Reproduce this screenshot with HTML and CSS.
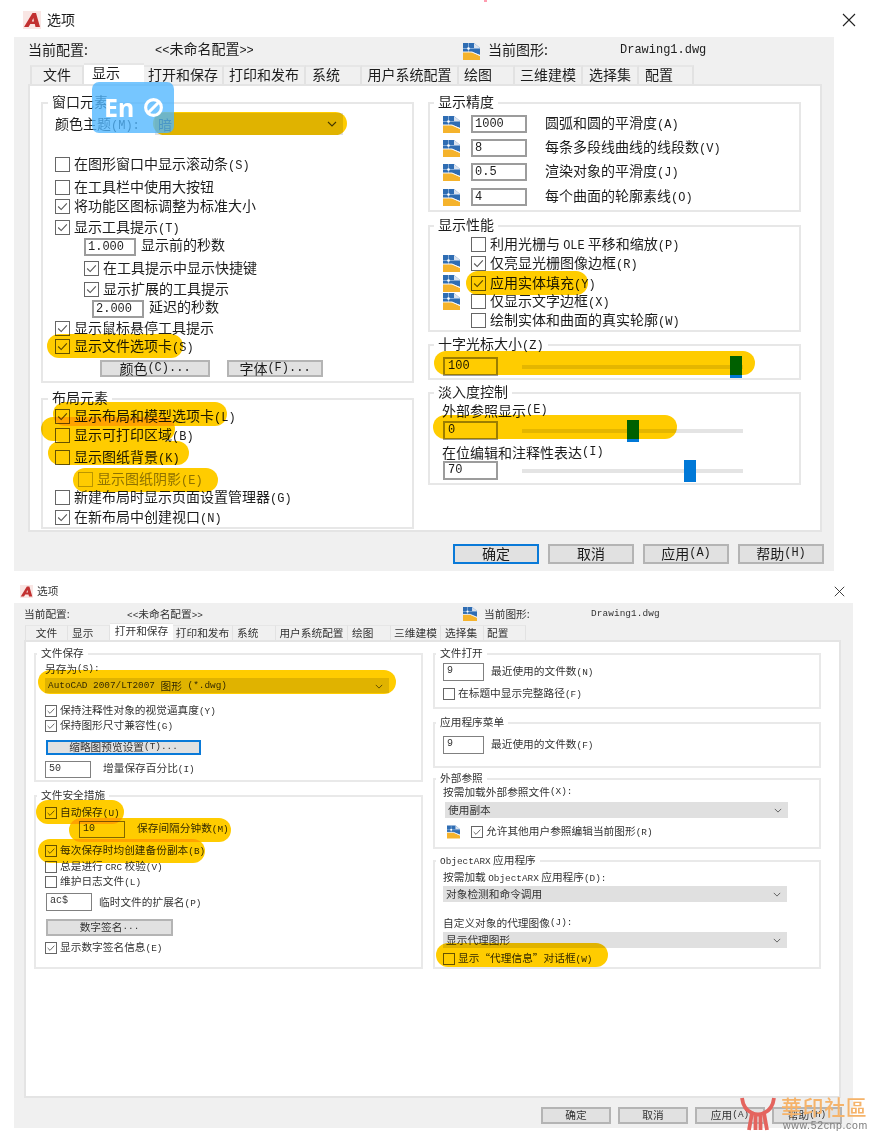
FILE: index.html
```html
<!DOCTYPE html>
<html lang="zh-CN">
<head>
<meta charset="utf-8">
<title>选项</title>
<link rel="stylesheet" href="styles.css">
</head>
<body>
<svg class="defs" aria-hidden="true">
  <symbol id="tick" viewBox="0 0 15 15"><path d="M2.5 7.5 6 11l6.5-7" fill="none" stroke="#555" stroke-width="1.3"/></symbol>
  <symbol id="cad" viewBox="0 0 17 17">
    <path d="M0 0h11l6 5v7L9 9H0z" fill="#2f6db3"/>
    <path d="M11 0l6 5h-6z" fill="#dbe3ee"/>
    <path d="M0 5.500h17M5.500 0v9" stroke="#a9c6e8" stroke-width=".7"/>
    <circle cx="5.500" cy="5.500" r="1.300" fill="#fff"/>
    <path d="M0 9h8l9 4v4H0z" fill="#f5b32c"/>
    <path d="M0 9h9l8 3.500" fill="none" stroke="#f5f5f5" stroke-width="1"/>
  </symbol>
  <symbol id="autocad" viewBox="0 0 18 18">
    <rect width="18" height="18" fill="#f9e6e4"/>
    <path d="M1 16 9.500 2H13l4 14h-4.500l-.7-3H7.300l-1.800 3zM8.800 10.500H11L10.300 7z" fill="#c23030"/>
  </symbol>
</svg>
<main class="page">
  <div class="dot"></div>

  <section class="dialog dialog-a">
    <header class="titlebar">
      <svg class="logo"><use href="#autocad"/></svg>
      <span class="title">选项</span>
      <svg class="close" viewBox="0 0 14 14"><path d="M1 1l12 12M13 1 1 13" stroke="#222" stroke-width="1.1"/></svg>
    </header>
    <div class="body">
      <div class="profile">
        <span class="p-label">当前配置:</span>
        <span class="p-value"><i class="k">&lt;&lt;</i>未命名配置<i class="k">&gt;&gt;</i></span>
        <svg class="cad"><use href="#cad"/></svg>
        <span class="p-label2">当前图形:</span>
        <span class="k p-file">Drawing1.dwg</span>
      </div>
      <nav class="tabs">
        <span class="tab">文件</span><span class="tab active">显示</span><span class="tab">打开和保存</span><span class="tab">打印和发布</span><span class="tab">系统</span><span class="tab">用户系统配置</span><span class="tab">绘图</span><span class="tab">三维建模</span><span class="tab">选择集</span><span class="tab">配置</span>
      </nav>
      <div class="panel">
        <div class="col">
          <div class="group g-window">
            <span class="legend">窗口元素</span>
            <div class="row tall mt-9"><span class="theme-label">颜色主题<i class="k">(M):</i></span><div class="select theme-select"><span>暗</span><svg class="chev" viewBox="0 0 10 6"><path d="M1 1l4 4 4-4" fill="none" stroke="#444" stroke-width="1.1"/></svg></div></div>
            <div class="row mt-20"><span class="box"></span><span>在图形窗口中显示滚动条<i class="k">(S)</i></span></div>
            <div class="row mt-5"><span class="box"></span><span>在工具栏中使用大按钮</span></div>
            <div class="row mt-1"><span class="box"><svg><use href="#tick"/></svg></span><span>将功能区图标调整为标准大小</span></div>
            <div class="row mt-3"><span class="box"><svg><use href="#tick"/></svg></span><span>显示工具提示<i class="k">(T)</i></span></div>
            <div class="row mt-2 in-29"><span class="inp w-52">1.000</span><span class="after-inp up">显示前的秒数</span></div>
            <div class="row mt-3 in-29"><span class="box"><svg><use href="#tick"/></svg></span><span>在工具提示中显示快捷键</span></div>
            <div class="row mt-3 in-29"><span class="box"><svg><use href="#tick"/></svg></span><span>显示扩展的工具提示</span></div>
            <div class="row mt-2 in-37"><span class="inp w-52">2.000</span><span class="after-inp up">延迟的秒数</span></div>
            <div class="row mt-1"><span class="box"><svg><use href="#tick"/></svg></span><span>显示鼠标悬停工具提示</span></div>
            <div class="row"><span class="box"><svg><use href="#tick"/></svg></span><span>显示文件选项卡<i class="k">(S)</i></span></div>
            <div class="row mt-5 in-45 btn-row"><span class="btn b-color">颜色<i class="k">(C)...</i></span><span class="btn b-font">字体<i class="k">(F)...</i></span></div>
          </div>
          <div class="group g-layout">
            <span class="legend">布局元素</span>
            <div class="row mt-7"><span class="box"><svg><use href="#tick"/></svg></span><span>显示布局和模型选项卡<i class="k">(L)</i></span></div>
            <div class="row mt-1"><span class="box"></span><span>显示可打印区域<i class="k">(B)</i></span></div>
            <div class="row mt-4"><span class="box"></span><span>显示图纸背景<i class="k">(K)</i></span></div>
            <div class="row mt-4 in-23 disabled"><span class="box"></span><span>显示图纸阴影<i class="k">(E)</i></span></div>
            <div class="row"><span class="box"></span><span>新建布局时显示页面设置管理器<i class="k">(G)</i></span></div>
            <div class="row mt-2"><span class="box"><svg><use href="#tick"/></svg></span><span>在新布局中创建视口<i class="k">(N)</i></span></div>
          </div>
        </div>
        <div class="col">
          <div class="group g-precision pad-3">
            <span class="legend">显示精度</span>
            <div class="row mt-11"><svg class="cad"><use href="#cad"/></svg><span class="inp w-56">1000</span><span class="after-w">圆弧和圆的平滑度<i class="k">(A)</i></span></div>
            <div class="row mt-6"><svg class="cad"><use href="#cad"/></svg><span class="inp w-56">8</span><span class="after-w">每条多段线曲线的线段数<i class="k">(V)</i></span></div>
            <div class="row mt-6"><svg class="cad"><use href="#cad"/></svg><span class="inp w-56">0.5</span><span class="after-w">渲染对象的平滑度<i class="k">(J)</i></span></div>
            <div class="row mt-7"><svg class="cad"><use href="#cad"/></svg><span class="inp w-56">4</span><span class="after-w">每个曲面的轮廓素线<i class="k">(O)</i></span></div>
          </div>
          <div class="group g-perf pad-3">
            <span class="legend">显示性能</span>
            <div class="row mt-8"><span class="cad-slot"></span><span class="box"></span><span>利用光栅与 <i class="k">OLE</i> 平移和缩放<i class="k">(P)</i></span></div>
            <div class="row mt-1"><svg class="cad"><use href="#cad"/></svg><span class="box"><svg><use href="#tick"/></svg></span><span>仅亮显光栅图像边框<i class="k">(R)</i></span></div>
            <div class="row mt-2"><svg class="cad"><use href="#cad"/></svg><span class="box"><svg><use href="#tick"/></svg></span><span>应用实体填充<i class="k">(Y)</i></span></div>
            <div class="row"><svg class="cad"><use href="#cad"/></svg><span class="box"></span><span>仅显示文字边框<i class="k">(X)</i></span></div>
            <div class="row mt-1"><span class="cad-slot"></span><span class="box"></span><span>绘制实体和曲面的真实轮廓<i class="k">(W)</i></span></div>
          </div>
          <div class="group g-cross pad-3">
            <span class="legend">十字光标大小<i class="k">(Z)</i></span>
            <div class="row mt-11"><span class="inp w-55">100</span><div class="slider"><span class="thumb t-100"></span></div></div>
          </div>
          <div class="group g-fade pad-3">
            <span class="legend">淡入度控制</span>
            <div class="row mt-7 label-in">外部参照显示<i class="k">(E)</i></div>
            <div class="row mt-2"><span class="inp w-55">0</span><div class="slider"><span class="thumb t-0"></span></div></div>
            <div class="row mt-3 label-in">在位编辑和注释性表达<i class="k">(I)</i></div>
            <div class="row"><span class="inp w-55">70</span><div class="slider"><span class="thumb t-70"></span></div></div>
          </div>
        </div>
      </div>
      <footer class="footer">
        <span class="btn primary">确定</span><span class="btn">取消</span><span class="btn">应用<i class="k">(A)</i></span><span class="btn">帮助<i class="k">(H)</i></span>
      </footer>
    </div>
  </section>

  <section class="dialog dialog-b">
    <header class="titlebar">
      <svg class="logo"><use href="#autocad"/></svg>
      <span class="title">选项</span>
      <svg class="close" viewBox="0 0 14 14"><path d="M1 1l12 12M13 1 1 13" stroke="#222" stroke-width="1.1"/></svg>
    </header>
    <div class="body">
      <div class="profile">
        <span class="p-label">当前配置:</span>
        <span class="p-value"><i class="k">&lt;&lt;</i>未命名配置<i class="k">&gt;&gt;</i></span>
        <svg class="cad"><use href="#cad"/></svg>
        <span class="p-label2">当前图形:</span>
        <span class="k p-file">Drawing1.dwg</span>
      </div>
      <nav class="tabs">
        <span class="tab">文件</span><span class="tab">显示</span><span class="tab active">打开和保存</span><span class="tab">打印和发布</span><span class="tab">系统</span><span class="tab">用户系统配置</span><span class="tab">绘图</span><span class="tab">三维建模</span><span class="tab">选择集</span><span class="tab">配置</span>
      </nav>
      <div class="panel">
        <div class="col">
          <div class="group g-save">
            <span class="legend">文件保存</span>
            <div class="row mt-7">另存为<i class="k">(S):</i></div>
            <div class="select sel-saveas mt-2"><span class="k">AutoCAD 2007/LT2007 </span><span>图形</span><span class="k"> (*.dwg)</span><svg class="chev" viewBox="0 0 10 6"><path d="M1 1l4 4 4-4" fill="none" stroke="#444" stroke-width="1"/></svg></div>
            <div class="row mt-11"><span class="box"><svg><use href="#tick"/></svg></span><span>保持注释性对象的视觉逼真度<i class="k">(Y)</i></span></div>
            <div class="row mt-1"><span class="box"><svg><use href="#tick"/></svg></span><span>保持图形尺寸兼容性<i class="k">(G)</i></span></div>
            <div class="row mt-7 in-1 row-btn"><span class="btn primary b-thumb">缩略图预览设置<i class="k">(T)...</i></span></div>
            <div class="row mt-6 row-inp"><span class="inp w-46">50</span><span class="after-50">增量保存百分比<i class="k">(I)</i></span></div>
          </div>
          <div class="group g-safety">
            <span class="legend">文件安全措施</span>
            <div class="row mt-9"><span class="box"><svg><use href="#tick"/></svg></span><span>自动保存<i class="k">(U)</i></span></div>
            <div class="row mt-1 in-34 row-inp"><span class="inp w-46">10</span><span class="after-50">保存间隔分钟数<i class="k">(M)</i></span></div>
            <div class="row mt-6"><span class="box"><svg><use href="#tick"/></svg></span><span>每次保存时均创建备份副本<i class="k">(B)</i></span></div>
            <div class="row mt-2"><span class="box"></span><span>总是进行 <i class="k">CRC</i> 校验<i class="k">(V)</i></span></div>
            <div class="row mt-1"><span class="box"></span><span>维护日志文件<i class="k">(L)</i></span></div>
            <div class="row mt-4 in-1 row-inp18"><span class="inp w-46">ac$</span><span class="after-ac">临时文件的扩展名<i class="k">(P)</i></span></div>
            <div class="row mt-8 in-1 row-inp"><span class="btn b-sign">数字签名<i class="k">...</i></span></div>
            <div class="row mt-5"><span class="box"><svg><use href="#tick"/></svg></span><span>显示数字签名信息<i class="k">(E)</i></span></div>
          </div>
        </div>
        <div class="col">
          <div class="group g-open">
            <span class="legend">文件打开</span>
            <div class="row mt-8 row-inp18"><span class="inp w-41">9</span><span class="after-9">最近使用的文件数<i class="k">(N)</i></span></div>
            <div class="row mt-6"><span class="box"></span><span>在标题中显示完整路径<i class="k">(F)</i></span></div>
          </div>
          <div class="group g-menu">
            <span class="legend">应用程序菜单</span>
            <div class="row mt-12 row-inp18"><span class="inp w-41">9</span><span class="after-9">最近使用的文件数<i class="k">(F)</i></span></div>
          </div>
          <div class="group g-xref">
            <span class="legend">外部参照</span>
            <div class="row mt-5">按需加载外部参照文件<i class="k">(X):</i></div>
            <div class="select sel-xref mt-3"><span>使用副本</span><svg class="chev" viewBox="0 0 10 6"><path d="M1 1l4 4 4-4" fill="none" stroke="#444" stroke-width="1"/></svg></div>
            <div class="row mt-7 in-4"><svg class="cad"><use href="#cad"/></svg><span class="box"><svg><use href="#tick"/></svg></span><span>允许其他用户参照编辑当前图形<i class="k">(R)</i></span></div>
          </div>
          <div class="group g-arx">
            <span class="legend"><i class="k">ObjectARX</i> 应用程序</span>
            <div class="row mt-8"><span>按需加载 <i class="k">ObjectARX</i> 应用程序<i class="k">(D):</i></span></div>
            <div class="select sel-arx mt-2"><span>对象检测和命令调用</span><svg class="chev" viewBox="0 0 10 6"><path d="M1 1l4 4 4-4" fill="none" stroke="#444" stroke-width="1"/></svg></div>
            <div class="row mt-14">自定义对象的代理图像<i class="k">(J):</i></div>
            <div class="select sel-arx mt-2"><span>显示代理图形</span><svg class="chev" viewBox="0 0 10 6"><path d="M1 1l4 4 4-4" fill="none" stroke="#444" stroke-width="1"/></svg></div>
            <div class="row mt-4"><span class="box"></span><span>显示“代理信息”对话框<i class="k">(W)</i></span></div>
          </div>
        </div>
      </div>
      <footer class="footer">
        <span class="btn">确定</span><span class="btn">取消</span><span class="btn">应用<i class="k">(A)</i></span><span class="btn">帮助<i class="k">(H)</i></span>
      </footer>
    </div>
  </section>

  <div class="hl h1"></div><div class="hl h2"></div><div class="hl h3"></div><div class="hl h4"></div><div class="hl h5"></div><div class="hl h6"></div><div class="hl h7"></div><div class="hl h8"></div><div class="hl h9"></div>
  <div class="hl h10"></div><div class="hl h11"></div><div class="hl h12"></div><div class="hl h13"></div><div class="hl h14"></div>

  <div class="ime"><span>En</span><svg viewBox="0 0 20 20"><circle cx="10" cy="10" r="7.5" fill="none" stroke="#fff" stroke-width="3"/><path d="M5 15 15 5" stroke="#fff" stroke-width="3"/></svg></div>

  <div class="watermark">
    <svg class="wm-logo" viewBox="0 0 36 34"><path d="M2 1C3 9 7 14 12 16L9 33M34 1C33 9 29 14 24 16L27 33M12 16Q18 19 24 16M15.500 19V33M20.500 19V33" fill="none" stroke="#e4645e" stroke-width="3.800"/></svg>
    <span class="wm-name">華印社區</span>
    <span class="wm-url">www.52cnp.com</span>
  </div>
</main>
</body>
</html>
```
FILE: styles.css
```css
* { box-sizing: border-box; }
html, body { margin: 0; padding: 0; overflow: hidden; background: #fff; }
.defs { position: absolute; width: 0; height: 0; }
.page {
  position: relative;
  width: 869px;
  height: 1132px;
  overflow: hidden;
  background: #fff;
  color: #1c1c1c;
  font-family: "Noto Sans CJK SC", "Liberation Sans", sans-serif;
  filter: blur(.35px);
}
.k { font-family: "Liberation Mono", monospace; font-style: normal; font-size: .857em; }
i.k { line-height: 0; }
.dot { position: absolute; left: 484px; top: 0; width: 3px; height: 2px; background: #ff9db0; }

/* ---- shared dialog structure ---- */
.titlebar { display: flex; align-items: center; }
.close { margin-left: auto; }
.profile { display: flex; align-items: center; }
.tabs { display: flex; align-items: flex-end; }
.tab {
  display: block;
  text-align: center;
  background: #f0f0f0;
  border-top: 2px solid #e6e6e6;
  border-right: 2px solid #e2e2e2;
}
.tab:nth-child(1) { border-left: 2px solid #e2e2e2; }
.tab.active { background: #fff; border-right: 0; }
.panel {
  display: grid;
  background: #fff;
  border: 2px solid #e4e4e4;
}
.group { position: relative; border: 2px solid #e7e7e7; background: #fff; }
.legend { position: absolute; background: #fff; white-space: nowrap; }
.row { display: flex; align-items: center; white-space: nowrap; }
.box {
  display: block;
  flex: none;
  background: #fff;
  border: 1.5px solid #666;
}
.box svg { display: block; width: 100%; height: 100%; }
.inp {
  display: block;
  flex: none;
  background: #fff;
  font-family: "Liberation Mono", monospace;
  white-space: nowrap;
}
.select { position: relative; display: flex; align-items: center; background: #e0e0e0; white-space: pre; }
.chev { position: absolute; top: 50%; }
.btn {
  display: flex;
  align-items: center;
  justify-content: center;
  background: #e1e1e1;
  border: 2px solid #b4b4b4;
  padding-bottom: 2px;
  white-space: nowrap;
}
.btn.primary { border-color: #0a7ad8; }
.footer { display: flex; justify-content: flex-end; }
.cad { display: block; flex: none; }

.mt-1 { margin-top: 1px; } .mt-2 { margin-top: 2px; } .mt-3 { margin-top: 3px; } .mt-4 { margin-top: 4px; }
.mt-5 { margin-top: 5px; } .mt-6 { margin-top: 6px; } .mt-7 { margin-top: 7px; } .mt-8 { margin-top: 8px; }
.mt-9 { margin-top: 9px; } .mt-11 { margin-top: 11px; } .mt-12 { margin-top: 12px; } .mt-14 { margin-top: 14px; }
.mt-20 { margin-top: 20px; }

/* ---- dialog A ---- */
.dialog-a { font-size: 14px; line-height: 18px; }
.dialog-a .titlebar { height: 37px; padding: 3px 13px 0 23px; }
.dialog-a .logo { width: 18px; height: 18px; }
.dialog-a .title { margin-left: 6px; margin-bottom: 2px; font-size: 14px; }
.dialog-a .close { width: 14px; height: 14px; margin-right: 0; }
.dialog-a .body { margin-left: 14px; width: 820px; height: 534px; background: #f0f0f0; }
.dialog-a .profile { height: 28px; padding-left: 14px; }
.dialog-a .p-label { width: 127px; margin-bottom: 4px; }
.dialog-a .p-value { width: 308px; margin-bottom: 6px; }
.dialog-a .cad { width: 17px; height: 17px; }
.dialog-a .p-label2 { width: 132px; margin-left: 8px; margin-bottom: 5px; }
.dialog-a .p-file { margin-bottom: 2px; }
.dialog-a .tabs { height: 19px; margin-left: 16px; }
.dialog-a .tab { height: 19px; line-height: 15px; }
.dialog-a .tab.active { height: 21px; padding: 0 0 0 8px; text-align: left; margin-top: -2px; }
.dialog-a .tab:nth-child(1) { width: 54px; }
.dialog-a .tab:nth-child(2) { width: 60px; }
.dialog-a .tab:nth-child(3) { width: 80px; }
.dialog-a .tab:nth-child(4) { width: 82px; }
.dialog-a .tab:nth-child(5) { width: 56px; text-align: left; padding-left: 6px; }
.dialog-a .tab:nth-child(6) { width: 97px; }
.dialog-a .tab:nth-child(7) { width: 56px; text-align: left; padding-left: 5px; }
.dialog-a .tab:nth-child(8) { width: 68px; }
.dialog-a .tab:nth-child(9) { width: 56px; text-align: left; padding-left: 6px; }
.dialog-a .tab:nth-child(10) { width: 55px; text-align: left; padding-left: 6px; }
.dialog-a .panel {
  margin-left: 14px;
  width: 794px;
  height: 448px;
  padding: 16px 0 0 11px;
  grid-template-columns: 373px 373px;
  column-gap: 14px;
  align-content: start;
}
.dialog-a .legend { left: 5px; top: -12px; padding: 0 4px; }
.dialog-a .pad-3 .legend { left: 4px; }
.dialog-a .row { height: 18px; }
.dialog-a .row.tall { height: 22px; }
.dialog-a .btn-row { height: 17px; }
.dialog-a .g-cross .row, .dialog-a .g-fade .row { height: 19px; }
.dialog-a .g-fade .label-in { height: 18px; }
.dialog-a .group { padding-left: 12px; }
.dialog-a .group.pad-3 { padding-left: 13px; }
.g-window { height: 281px; }
.g-layout { height: 131px; margin-top: 15px; }
.g-precision { height: 110px; }
.g-perf { height: 107px; margin-top: 13px; }
.g-cross { height: 36px; margin-top: 12px; }
.g-fade { height: 93px; margin-top: 12px; }
.theme-label { width: 100px; margin-bottom: 2px; }
.theme-select { width: 188px; height: 22px; padding-left: 3px; color: #333; }
.theme-select .chev { right: 6px; width: 10px; height: 6px; margin-top: -3px; }
.dialog-a .box { width: 15px; height: 15px; margin-right: 4px; }
.dialog-a .box + span { margin-bottom: 3px; }
.dialog-a .inp { height: 18px; line-height: 15px; border: 2px solid #9c9c9c; padding-left: 2px; font-size: 12px; }
.dialog-a .inp.w-55 { height: 19px; }
.w-52 { width: 52px; } .w-56 { width: 56px; } .w-55 { width: 55px; } .w-46 { width: 46px; } .w-41 { width: 41px; }
.in-29 { margin-left: 29px; } .in-37 { margin-left: 37px; } .in-45 { margin-left: 45px; } .in-23 { margin-left: 23px; }
.in-1 { margin-left: 1px; } .in-4 { margin-left: 4px; } .in-34 { margin-left: 34px; }
.after-inp { margin-left: 5px; }
.up { margin-bottom: 7px; }
.after-w { margin-left: 18px; margin-bottom: 5px; }
.disabled { color: #8f8f8f; }
.disabled .box { border-color: #bbb; }
.dialog-a .pad-3 .cad { margin-right: 11px; }
.cad-slot { width: 28px; flex: none; }
.btn-row { gap: 17px; }
.b-color { width: 110px; height: 17px; }
.b-font { width: 96px; height: 17px; }
.g-fade .inp, .g-cross .inp { padding-left: 3px; }
.label-in { margin-left: -1px; }
.slider { position: relative; width: 221px; height: 4px; margin-left: 24px; background: #e4e4e4; }
.thumb { position: absolute; top: -9px; width: 12px; height: 22px; background: #0078d7; }
.t-100 { left: 208px; } .t-0 { left: 105px; } .t-70 { left: 162px; }
.dialog-a .footer { gap: 9px; padding-right: 10px; margin-top: 12px; }
.dialog-a .footer .btn { width: 86px; height: 20px; }

/* ---- dialog B ---- */
.dialog-b { font-size: 10.7px; line-height: 14px; color: #333; }
.dialog-b .k { font-size: 9.4px; }
.dialog-b .titlebar { height: 32px; padding: 8px 9px 0 20px; }
.dialog-b .logo { width: 13px; height: 13px; }
.dialog-b .title { margin-left: 4px; }
.dialog-b .close { width: 11px; height: 11px; margin-right: 15px; }
.dialog-b .body { margin-left: 14px; width: 839px; height: 525px; background: #f0f0f0; }
.dialog-b .profile { height: 22px; padding-left: 10px; }
.dialog-b .p-label { width: 103px; }
.dialog-b .p-value { width: 336px; }
.dialog-b .cad { width: 14px; height: 14px; }
.dialog-b .p-label2 { width: 107px; margin-left: 7px; }
.dialog-b .p-file { letter-spacing: .1px; }
.dialog-b .tabs { height: 15px; margin-left: 11px; }
.dialog-b .tab { height: 15px; border-top-width: 1px; border-right-width: 1px; line-height: 14px; }
.dialog-b .tab:nth-child(1) { border-left-width: 1px; width: 43px; }
.dialog-b .tab.active { height: 17px; margin-top: -2px; border-top-width: 1px; }
.dialog-b .tab:nth-child(2) { width: 42px; text-align: left; padding-left: 4px; }
.dialog-b .tab:nth-child(3) { width: 63px; }
.dialog-b .tab:nth-child(4) { width: 60px; }
.dialog-b .tab:nth-child(5) { width: 43px; text-align: left; padding-left: 4px; }
.dialog-b .tab:nth-child(6) { width: 72px; }
.dialog-b .tab:nth-child(7) { width: 43px; text-align: left; padding-left: 4px; }
.dialog-b .tab:nth-child(8) { width: 50px; }
.dialog-b .tab:nth-child(9) { width: 43px; text-align: left; padding-left: 4px; }
.dialog-b .tab:nth-child(10) { width: 42px; text-align: left; padding-left: 3px; }
.dialog-b .panel {
  margin-left: 10px;
  width: 817px;
  height: 458px;
  padding: 11px 0 0 8px;
  grid-template-columns: 389px 388px;
  column-gap: 10px;
  align-content: start;
}
.dialog-b .legend { left: 1px; top: -9px; padding: 0 4px; }
.dialog-b .row { height: 14px; }
.dialog-b .row.row-inp { height: 17px; }
.dialog-b .row.row-btn { height: 15px; }
.dialog-b .row.row-inp18 { height: 18px; }
.dialog-b .group { padding-left: 9px; border-color: #e9e9e9; }
.dialog-b .col:nth-child(2) .group { padding-left: 8px; }
.g-save { height: 129px; }
.g-safety { height: 174px; margin-top: 13px; }
.g-open { height: 56px; }
.g-menu { height: 46px; margin-top: 13px; }
.g-xref { height: 71px; margin-top: 10px; }
.g-arx { height: 109px; margin-top: 11px; }
.dialog-b .box { width: 12px; height: 12px; margin-right: 3px; border-width: 1px; }
.dialog-b .box + span { margin-bottom: 2px; }
.dialog-b .inp { height: 17px; line-height: 13px; border: 1px solid #808080; padding-left: 3px; font-size: 10px; }
.dialog-b .row-inp18 .inp { height: 18px; }
.dialog-b .group .cad { width: 13px; height: 14px; margin-right: 11px; }
.sel-saveas { width: 344px; height: 15px; padding-left: 3px; }
.sel-xref { width: 343px; height: 16px; margin-left: 2px; padding-left: 3px; }
.sel-arx { width: 344px; height: 16px; padding-left: 3px; }
.dialog-b .chev { right: 6px; width: 8px; height: 5px; margin-top: -2px; }
.after-50 { margin-left: 12px; margin-bottom: 3px; }
.after-ac { margin-left: 7px; }
.after-9 { margin-left: 7px; margin-bottom: 2px; }
.b-thumb { width: 155px; height: 15px; }
.b-sign { width: 127px; height: 17px; }
.dialog-b .footer { gap: 7px; padding-right: 11px; margin-top: 9px; }
.dialog-b .footer .btn { width: 70px; height: 17px; }

/* ---- marker highlights laid over both dialogs ---- */
.hl { position: absolute; background: #ffcc00; border-radius: 12px; mix-blend-mode: multiply; }
.h1 { left: 153px; top: 112px; width: 194px; height: 23px; }
.h2 { left: 47px; top: 334px; width: 136px; height: 24px; }
.h3 { left: 53px; top: 402px; width: 174px; height: 24px; }
.h4 { left: 41px; top: 417px; width: 134px; height: 24px; }
.h5 { left: 48px; top: 441px; width: 141px; height: 24px; }
.h6 { left: 73px; top: 468px; width: 145px; height: 24px; }
.h7 { left: 466px; top: 271px; width: 122px; height: 24px; }
.h8 { left: 434px; top: 351px; width: 321px; height: 24px; }
.h9 { left: 433px; top: 415px; width: 244px; height: 24px; }
.h10 { left: 38px; top: 670px; width: 358px; height: 24px; }
.h11 { left: 36px; top: 800px; width: 88px; height: 24px; }
.h12 { left: 69px; top: 818px; width: 162px; height: 24px; }
.h13 { left: 38px; top: 839px; width: 167px; height: 24px; }
.h14 { left: 436px; top: 943px; width: 172px; height: 24px; }

/* ---- input-method badge ---- */
.ime {
  position: absolute;
  left: 92px;
  top: 82px;
  width: 82px;
  height: 51px;
  border-radius: 7px;
  background: rgba(80, 182, 255, .78);
  color: #fff;
  font-family: "Noto Sans", sans-serif;
  font-size: 25px;
  font-weight: 700;
  line-height: 49px;
  display: flex;
  align-items: center;
  padding-left: 12px;
}
.ime svg { width: 21px; height: 21px; margin-left: 9px; }

/* ---- watermark ---- */
.watermark { position: absolute; left: 740px; top: 1094px; width: 129px; height: 38px; }
.wm-logo { position: absolute; left: 0; top: 3px; width: 36px; height: 34px; }
.wm-name {
  position: absolute;
  left: 41px;
  top: -2px;
  font-family: "Noto Sans CJK TC", sans-serif;
  font-size: 21px;
  font-weight: 500;
  line-height: 28px;
  letter-spacing: .6px;
  color: #f5b36a;
  white-space: nowrap;
}
.wm-url {
  position: absolute;
  left: 43px;
  top: 25px;
  font-family: "Liberation Sans", sans-serif;
  font-size: 10.5px;
  line-height: 12px;
  letter-spacing: .65px;
  color: #7d7d7d;
  white-space: nowrap;
}
```
